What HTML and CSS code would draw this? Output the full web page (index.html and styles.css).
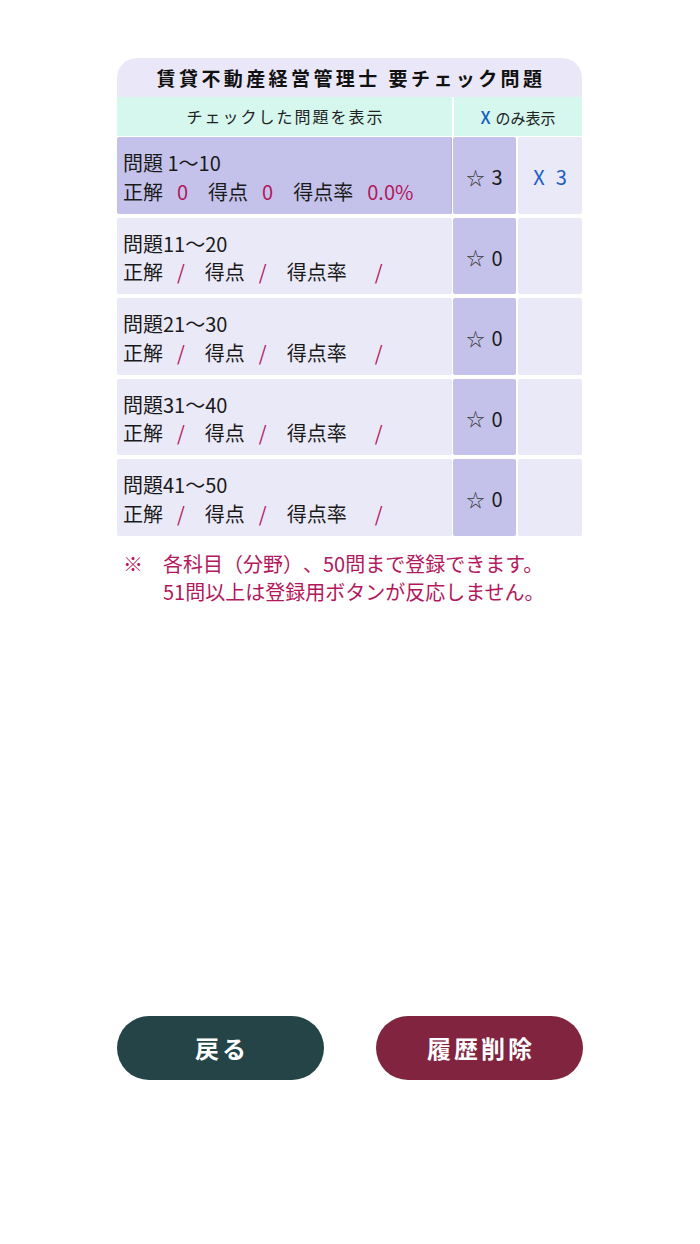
FILE: index.html
```html
<!DOCTYPE html>
<html lang="ja">
<head>
<meta charset="utf-8">
<title>要チェック問題</title>
<link rel="stylesheet" href="styles.css">
</head>
<body>
<main class="page">
  <section class="panel">
    <h1 class="title">賃貸不動産経営管理士<span class="sp"></span>要チェック問題</h1>
    <div class="head">
      <div class="head-main">チェックした問題を表示</div>
      <div class="head-x"><span class="x">X</span>のみ表示</div>
    </div>
    <div class="row active">
      <div class="info">
        <div class="name">問題 1〜10</div>
        <div class="stats"><span class="lbl">正解</span><span class="val">0</span><span class="lbl">得点</span><span class="val">0</span><span class="lbl">得点率</span><span class="val">0.0%</span></div>
      </div>
      <div class="star"><span class="st">☆</span>3</div>
      <div class="xc"><span class="x">X</span><span class="xn">3</span></div>
    </div>
    <div class="row">
      <div class="info">
        <div class="name">問題11〜20</div>
        <div class="stats"><span class="lbl">正解</span><span class="val">/</span><span class="lbl">得点</span><span class="val">/</span><span class="lbl">得点率</span><span class="val last">/</span></div>
      </div>
      <div class="star"><span class="st">☆</span>0</div>
      <div class="xc"></div>
    </div>
    <div class="row">
      <div class="info">
        <div class="name">問題21〜30</div>
        <div class="stats"><span class="lbl">正解</span><span class="val">/</span><span class="lbl">得点</span><span class="val">/</span><span class="lbl">得点率</span><span class="val last">/</span></div>
      </div>
      <div class="star"><span class="st">☆</span>0</div>
      <div class="xc"></div>
    </div>
    <div class="row">
      <div class="info">
        <div class="name">問題31〜40</div>
        <div class="stats"><span class="lbl">正解</span><span class="val">/</span><span class="lbl">得点</span><span class="val">/</span><span class="lbl">得点率</span><span class="val last">/</span></div>
      </div>
      <div class="star"><span class="st">☆</span>0</div>
      <div class="xc"></div>
    </div>
    <div class="row">
      <div class="info">
        <div class="name">問題41〜50</div>
        <div class="stats"><span class="lbl">正解</span><span class="val">/</span><span class="lbl">得点</span><span class="val">/</span><span class="lbl">得点率</span><span class="val last">/</span></div>
      </div>
      <div class="star"><span class="st">☆</span>0</div>
      <div class="xc"></div>
    </div>
    <p class="note">※　各科目（分野）、50問まで登録できます。<br>51問以上は登録用ボタンが反応しません。</p>
  </section>
  <div class="actions">
    <button class="btn back">戻る</button>
    <button class="btn clear">履歴削除</button>
  </div>
</main>
</body>
</html>
```

FILE: styles.css
```css
html, body {
  margin: 0;
  padding: 0;
  background: #ffffff;
}
body {
  font-family: "Noto Sans CJK JP", "Noto Sans", sans-serif;
  color: #1a1a1a;
  width: 700px;
  height: 1244px;
  overflow: hidden;
  text-spacing-trim: space-all;
}
.page {
  width: 465px;
  margin-left: 117px;
  padding-top: 58px;
}
.panel {
  display: flex;
  flex-direction: column;
}
.title {
  margin: 0;
  height: 39px;
  line-height: 39px;
  background: #eae8f8;
  border-radius: 20px 20px 0 0;
  font-size: 19px;
  font-weight: 700;
  letter-spacing: 3.4px;
  text-align: center;
  color: #111;
  padding-left: 3px;
}
.title .sp {
  display: inline-block;
  width: 8px;
}
.head {
  display: flex;
  height: 39px;
  margin-bottom: 1px;
}
.head-main {
  width: 335px;
  background: #d5f7ee;
  font-size: 16px;
  letter-spacing: 2px;
  line-height: 39px;
  text-align: center;
  color: #222;
  padding-left: 2px;
  box-sizing: border-box;
}
.head-x {
  width: 128px;
  margin-left: 2px;
  background: #d5f7ee;
  font-size: 15px;
  line-height: 39px;
  text-align: center;
  color: #222;
}
.head-x .x {
  color: #1a5fc0;
  font-weight: 500;
  font-size: 17px;
  margin-right: 5px;
}
.row {
  display: flex;
  height: 76.5px;
  margin-bottom: 4px;
}
.info {
  width: 335px;
  background: #eae9f7;
  border-radius: 2px;
  padding: 12px 0 0 6px;
  box-sizing: border-box;
  font-size: 20px;
  line-height: 28.5px;
}
.row.active .info {
  background: #c4c2ea;
  box-shadow: inset -1px 0 0 #b7b5de;
}
.name {
  color: #1a1a1a;
}
.stats {
  display: flex;
  color: #1a1a1a;
}
.lbl + .val { margin-left: 14px; }
.val + .lbl { margin-left: 20px; }
.val {
  color: #b3175c;
}
.val.last { margin-left: 28px; }
.star {
  width: 63px;
  margin-left: 1px;
  background: #c4c2ea;
  border-radius: 2px;
  display: flex;
  align-items: center;
  justify-content: center;
  font-size: 20px;
  padding-top: 3px;
  box-sizing: border-box;
  color: #1a1a1a;
}
.st {
  font-size: 18px;
  margin-right: 7px;
  color: #333;
}
.xc {
  width: 64px;
  margin-left: 2px;
  background: #eae9f7;
  border-radius: 2px;
  display: flex;
  align-items: center;
  justify-content: center;
  font-size: 20px;
  padding-top: 3px;
  box-sizing: border-box;
  color: #1a5fc0;
}
.xn { margin-left: 11px; }
.note {
  margin: 10px 0 0 6px;
  padding-left: 40px;
  text-indent: -40px;
  font-size: 20px;
  line-height: 28px;
  color: #b3175c;
}
.actions {
  display: flex;
  justify-content: space-between;
  margin-top: 410px;
  width: 466px;
}
.btn {
  width: 207px;
  height: 64px;
  border: none;
  border-radius: 32px;
  color: #ffffff;
  font-family: "Noto Sans CJK JP", "Noto Sans", sans-serif;
  font-size: 24px;
  font-weight: 700;
  letter-spacing: 3px;
  padding: 0 0 0 3px;
}
.back { background: #244447; }
.clear { background: #80243f; }
```
